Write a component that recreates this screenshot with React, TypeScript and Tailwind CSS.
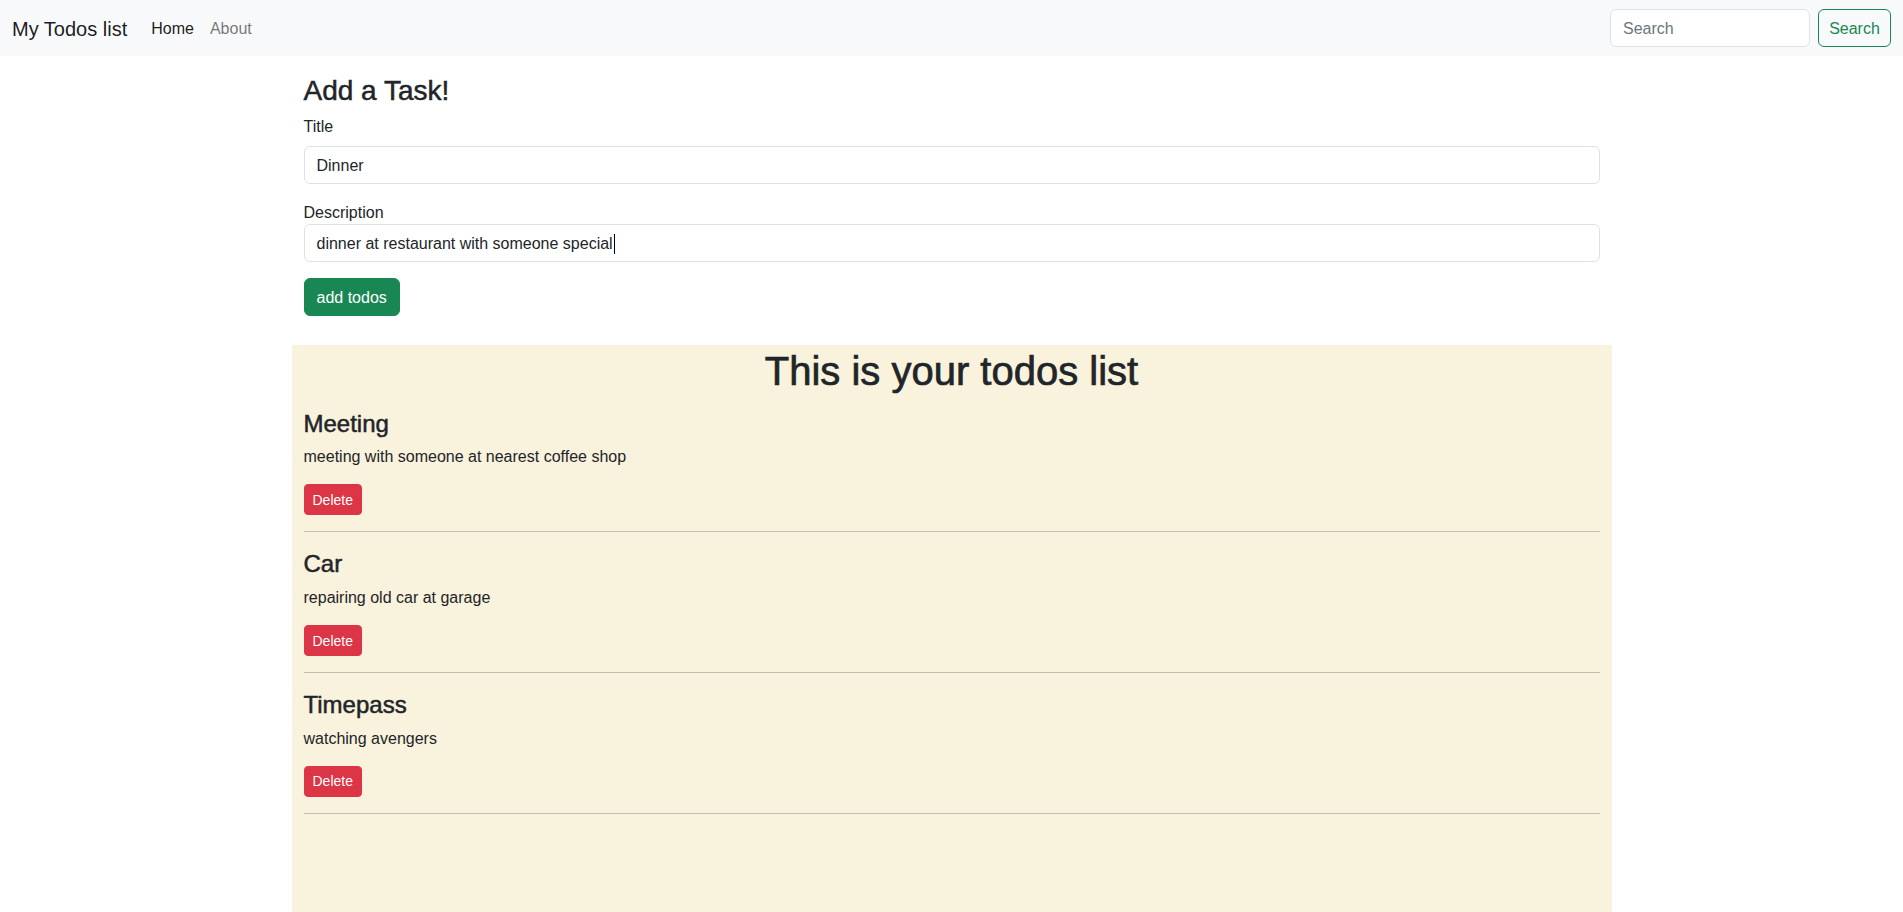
const todos = [
  { sno: 1, title: "Meeting", desc: "meeting with someone at nearest coffee shop" },
  { sno: 2, title: "Car", desc: "repairing old car at garage" },
  { sno: 3, title: "Timepass", desc: "watching avengers" },
];

function Header() {
  return (
    <nav className="h-14 bg-[#f8f9fa] px-3 flex items-center justify-between">
      <div className="flex items-center">
        <a href="#" className="text-[20px] leading-[30px] pt-[6px] pb-[4px] mr-4 text-black/90">
          My Todos list
        </a>
        <ul className="flex items-center">
          <li>
            <a href="#" className="block px-2 pt-[9px] pb-[7px] text-base leading-6 text-black/90">
              Home
            </a>
          </li>
          <li>
            <a href="#" className="block px-2 pt-[9px] pb-[7px] text-base leading-6 text-black/55">
              About
            </a>
          </li>
        </ul>
      </div>
      <form className="flex items-center" onSubmit={(e) => e.preventDefault()}>
        <input
          type="search"
          placeholder="Search"
          className="w-[200px] h-[38px] mr-2 px-3 pt-[2px] bg-white border border-[#dee2e6] rounded-[6px] text-base text-[#212529] placeholder:text-[#6c757d] outline-none"
        />
        <button
          type="submit"
          className="w-[73px] h-[38px] pt-[2px] flex items-center justify-center border border-[#198754] rounded-[6px] text-base text-[#198754] bg-transparent"
        >
          Search
        </button>
      </form>
    </nav>
  );
}

function AddTodo() {
  return (
    <div className="w-[1320px] mx-auto px-3 pt-4">
      <h3 className="text-[28px] leading-[33.6px] pt-[2px] mb-[6px] font-medium [-webkit-text-stroke:0.5px]">
        Add a Task!
      </h3>
      <form onSubmit={(e) => e.preventDefault()}>
        <div className="mb-4">
          <label className="block text-base leading-6 pt-px mb-[7px]">Title</label>
          <div className="h-[38px] px-3 pt-[2px] flex items-center border border-[#dee2e6] rounded-[6px] bg-white text-base">
            Dinner
          </div>
        </div>
        <div className="mb-4">
          <label className="block text-base leading-6 pt-px -mb-px">Description</label>
          <div className="h-[38px] px-3 pt-[2px] flex items-center border border-[#dee2e6] rounded-[6px] bg-white text-base">
            dinner at restaurant with someone special
            <span className="inline-block w-px h-5 bg-black ml-px" />
          </div>
        </div>
        <button
          type="submit"
          className="h-[38px] px-3 pt-[2px] bg-[#198754] border border-[#198754] rounded-[6px] text-base text-white"
        >
          add todos
        </button>
      </form>
    </div>
  );
}

function TodoItem({ todo }: { todo: (typeof todos)[number] }) {
  return (
    <div>
      <h4 className="text-2xl leading-[28.8px] pt-[2px] mb-[6px] font-medium [-webkit-text-stroke:0.5px]">
        {todo.title}
      </h4>
      <p className="text-base leading-6 pt-px mb-[15px]">{todo.desc}</p>
      <button className="h-[31px] px-2 pt-px bg-[#dc3545] border border-[#dc3545] rounded-[4px] text-sm leading-[21px] text-white">
        Delete
      </button>
      <hr className="my-4 border-0 border-t border-[#c3bfb0]" />
    </div>
  );
}

function Todos() {
  return (
    <div className="w-[1320px] mx-auto mt-[29px] px-3 min-h-[600px] bg-[#f9f2dc]">
      <h1 className="text-[40px] leading-[48px] pt-[2px] mb-[13px] font-medium text-center [-webkit-text-stroke:0.7px]">
        This is your todos list
      </h1>
      {todos.map((todo) => (
        <TodoItem key={todo.sno} todo={todo} />
      ))}
    </div>
  );
}

export default function App() {
  return (
    <div className="min-h-screen bg-white text-[#212529] font-['Liberation_Sans',Arial,sans-serif]">
      <Header />
      <AddTodo />
      <Todos />
    </div>
  );
}
